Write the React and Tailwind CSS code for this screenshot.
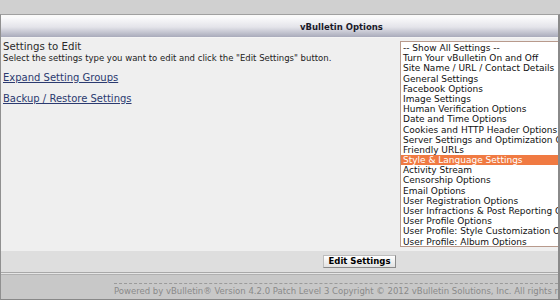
import React from "react";

const items = [
  "-- Show All Settings --",
  "Turn Your vBulletin On and Off",
  "Site Name / URL / Contact Details",
  "General Settings",
  "Facebook Options",
  "Image Settings",
  "Human Verification Options",
  "Date and Time Options",
  "Cookies and HTTP Header Options",
  "Server Settings and Optimization Options",
  "Friendly URLs",
  "Style & Language Settings",
  "Activity Stream",
  "Censorship Options",
  "Email Options",
  "User Registration Options",
  "User Infractions & Post Reporting Options",
  "User Profile Options",
  "User Profile: Style Customization Options",
  "User Profile: Album Options",
];

export default function App() {
  return (
    <div
      className="w-[560px] h-[300px] bg-[#c8c8c8] flex flex-col text-[#222]"
      style={{ fontFamily: '"DejaVu Sans", Verdana, sans-serif' }}
    >
      <div className="h-[14px] bg-[#d0d0d0] shrink-0" />
      <div className="flex-1 flex flex-col border-t border-[#a0a0a0] border-l border-l-[#909090] border-r-2 border-r-[#8a8a8a] border-b border-b-[#888] overflow-hidden">
        <div className="h-[2px] bg-[#fafafa]" />
        <div className="h-[20px] bg-gradient-to-b from-[#fbfbfc] via-[#e4e4ea] to-[#a9abbb] flex items-center pl-[299px] text-[8.5px] font-bold text-[#1a1a2a] whitespace-nowrap">
          vBulletin Options
        </div>
        <div className="h-[1px] bg-[#f4f4f4]" />
        <div className="h-[213px] bg-[#efefef] flex">
          <div className="w-[399px] shrink-0 pl-[2px] pt-[3px]">
            <div className="text-[10.2px] leading-[12px] text-[#2a2a2a]">Settings to Edit</div>
            <div className="text-[8.5px] leading-[10px] whitespace-nowrap text-[#222]">
              Select the settings type you want to edit and click the "Edit Settings" button.
            </div>
            <div className="mt-[9px] text-[10px] leading-[12px] text-[#2b3a70] underline">
              Expand Setting Groups
            </div>
            <div className="mt-[9px] text-[10px] leading-[12px] text-[#2b3a70] underline">
              Backup / Restore Settings
            </div>
          </div>
          <div className="mt-[3px] w-[200px] h-[206px] shrink-0 bg-white border border-[#b89a8c] pt-[1px] whitespace-nowrap overflow-hidden">
            {items.map((it, i) => (
              <div
                key={i}
                className={
                  "h-[10.2px] leading-[10.2px] text-[9px] pl-[2px] " +
                  (i === 11 ? "bg-[#f07a42] text-white" : "text-[#111]")
                }
              >
                {it}
              </div>
            ))}
          </div>
        </div>
        <div className="h-[21px] bg-[#dedede] flex items-center pl-[322px]">
          <div className="h-[13px] w-[73px] flex items-center justify-center bg-gradient-to-b from-white to-[#e2e2e2] border border-[#bdbdbd] border-b-[#8a8a8a] border-r-[#8a8a8a] text-[8.5px] font-bold text-black">
            Edit Settings
          </div>
        </div>
        <div className="h-[1px] bg-[#a8a8a8]" />
        <div className="h-[1px] bg-[#e6e6e6]" />
        <div className="h-[1px] bg-[#b0b0b0]" />
        <div className="flex-1 bg-[#c8c8c8] pt-[8px] pl-[113px]">
          <div className="border-t border-dashed border-[#9a9a9a] pt-[1px] text-[8.5px] leading-[12px] text-[#8a8a8a] whitespace-nowrap">
            Powered by vBulletin® Version 4.2.0 Patch Level 3 Copyright © 2012 vBulletin Solutions, Inc. All rights reserved.
          </div>
        </div>
      </div>
    </div>
  );
}
